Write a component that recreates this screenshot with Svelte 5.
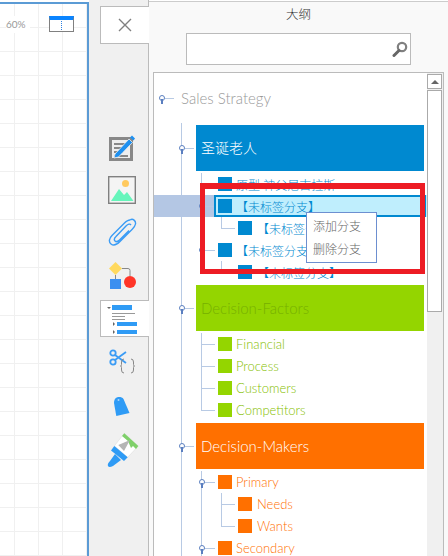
<script>
  const blue = '#0089d0', green = '#94d500', orange = '#ff7000';
  // l: 1 = big node, 2 = branch, 3 = leaf. more: the row's own trunk carries on below; pass: the level-2 trunk crosses a leaf row
  const rows = [
    { t: '圣诞老人', l: 1, c: blue, fg: '#fff', knob: true, cjk: true },
    { t: '原型 神父尼古拉斯', l: 2, c: blue, more: true, cjk: true },
    { t: '【未标签分支】', l: 2, c: blue, sel: true, knob: true, more: true, cjk: true },
    { t: '【未标签分支】', l: 3, c: blue, pass: true, cjk: true },
    { t: '【未标签分支】', l: 2, c: blue, knob: true, cjk: true },
    { t: '【未标签分支】', l: 3, c: blue, cjk: true },
    { t: 'Decision-Factors', l: 1, c: green, fg: '#76b000', knob: true },
    { t: 'Financial', l: 2, c: green, ink: '#86c000', more: true },
    { t: 'Process', l: 2, c: green, ink: '#86c000', more: true },
    { t: 'Customers', l: 2, c: green, ink: '#86c000', more: true },
    { t: 'Competitors', l: 2, c: green, ink: '#86c000' },
    { t: 'Decision-Makers', l: 1, c: orange, fg: '#fff', knob: true },
    { t: 'Primary', l: 2, c: orange, knob: true, more: true },
    { t: 'Needs', l: 3, c: orange, more: true, pass: true },
    { t: 'Wants', l: 3, c: orange, pass: true },
    { t: 'Secondary', l: 2, c: orange, knob: true, more: true }
  ];
</script>

<div class="page">
  <section class="canvas">
    <div class="zoom">
      <span class="pct">60%</span>
      <span class="layout-icon"><i></i></span>
    </div>
  </section>

  <nav class="rail">
    <div class="tab close">
      <svg width="14" height="14" viewBox="0 0 14 14"><path d="M1 1 L13 13 M13 1 L1 13" stroke="#808080" stroke-width="1.400" fill="none"/></svg>
    </div>
    <div class="tools upper">
      <svg width="26" height="27" viewBox="0 0 26 27">
        <rect x="1.500" y="3.500" width="21" height="21" fill="#eee" stroke="#888" stroke-width="3"/>
        <path d="M5 9h14M5 13h12M5 17h9M5 21h14" stroke="#888" stroke-width="2"/>
        <path d="M6 19 L20 4 L23.500 7.500 L9.500 22 L5 23 Z" fill="#1e90f0" stroke="#eee" stroke-width=".8"/>
        <path d="M21 2.500 L23 0.500 L26 3.500 L24.500 5.500 Z" fill="#1e90f0"/>
      </svg>
      <svg class="nudge" width="28" height="28" viewBox="0 0 28 28">
        <rect x=".7" y=".7" width="26.600" height="26.600" fill="#f4f4f4" stroke="#808080" stroke-width="1.400"/>
        <circle cx="17.500" cy="7.500" r="3.500" fill="#ffc95e"/>
        <path d="M3 25 L11 13 L16 19 L19 16 L25.500 25 Z" fill="#66f5bb"/>
      </svg>
      <svg class="nudge" width="30" height="29" viewBox="0 0 30 29">
        <path d="M22 2 C25 0 28 3 27.500 6 C27.200 8 26 9.500 24 11.500 L12 23.500 C9 26.500 5.500 28 3 26 C0.500 24 1 20.500 4 17.500 L16 5.500 C18 3.500 20 2 22 2 M23 7 C22 5.500 20 6 18 8 L8 18.500 C6.500 20 6 22 7 23 C8 24 10 23.500 11.500 22 L21 12.500" fill="none" stroke="#3b9cf5" stroke-width="1.400"/>
      </svg>
      <svg width="28" height="28" viewBox="0 0 28 28">
        <path d="M6.500 1 L13 7.500 L6.500 14 L0 7.500 Z" fill="#ffd95e"/>
        <rect x="1" y="18" width="11" height="10" fill="#3b8ff0"/>
        <circle cx="21" cy="21" r="6" fill="#ff3528"/>
        <path d="M13 7.500 H19 Q21 7.500 21 9.500 V15" fill="none" stroke="#888" stroke-width="1"/>
        <path d="M6.500 14 V18" stroke="#888" stroke-width="1"/>
      </svg>
    </div>
    <div class="tab list">
      <svg width="48" height="34" viewBox="0 0 48 34">
        <path d="M7 5 h4 l-2 2 Z" fill="#666"/>
        <rect x="12" y="3" width="20" height="5" fill="#2f9bf5"/>
        <path d="M12 11.500h23M12 14.500h13M12 17.500h13" stroke="#999" stroke-width="1"/>
        <path d="M13 20 l2 2 l-2 2 Z" fill="#666"/>
        <rect x="17" y="20" width="20" height="4" fill="#2f9bf5"/>
        <path d="M13 28 l2 2 l-2 2 Z" fill="#666"/>
        <rect x="17" y="28" width="20" height="4" fill="#2f9bf5"/>
      </svg>
    </div>
    <div class="tools lower">
      <svg width="26" height="28" viewBox="0 0 26 28">
        <circle cx="4" cy="4" r="2.700" fill="none" stroke="#3b9cf5" stroke-width="1.800"/>
        <circle cx="4" cy="13" r="2.700" fill="none" stroke="#3b9cf5" stroke-width="1.800"/>
        <path d="M6 6 L17 14 M6 11 L17 3" stroke="#3b9cf5" stroke-width="1.800"/>
        <path d="M15 10 Q12.500 10 12.500 13 V15.500 Q12.500 17 11.500 17 Q12.500 17 12.500 18.500 V21 Q12.500 24 15 24 M22 10 Q24.500 10 24.500 13 V15.500 Q24.500 17 25.500 17 Q24.500 17 24.500 18.500 V21 Q24.500 24 22 24" fill="none" stroke="#888" stroke-width="1"/>
      </svg>
      <svg class="tag" width="18" height="24" viewBox="0 0 18 24">
        <path d="M1 10 C1 6 3 4 6 4 C8 4 9.500 4.500 10.500 6 L16.500 20 L3.300 23 Z" fill="#2f9bf5"/>
        <circle cx="5.500" cy="7" r="1" fill="#a9d5fb"/>
      </svg>
      <svg class="nudge2" width="33" height="35" viewBox="0 0 33 35">
        <path d="M7.300 13 L17.300 .3 L31.300 13 L20.700 24.300 Z" fill="#fff" stroke="#ddd" stroke-width=".6"/>
        <path d="M17.300 .3 L31.300 13 L29 16 L26 13 L24 15 L21 8 L15 3 Z" fill="#7fd06a"/>
        <path d="M11.300 12 L23 7 L17 18 Z" fill="#b5b5b5"/>
        <path d="M7.300 13 L20.700 24.300 L17 28 L4 17.500 Z" fill="#2f9bf5"/>
        <path d="M8 21 L14 27 L6 33 Q2 35 1 33 Q0 31 3 28 Z" fill="#2f9bf5"/>
      </svg>
    </div>
  </nav>

  <main class="panel">
    <h1>大纲</h1>
    <div class="search">
      <svg width="16" height="16" viewBox="0 0 16 16">
        <circle cx="10" cy="6" r="4.200" fill="none" stroke="#808080" stroke-width="2.200"/>
        <path d="M7 9.500 L2 14.500" stroke="#666" stroke-width="3" stroke-linecap="round"/>
      </svg>
    </div>

    <div class="outline">
      <div class="tree">
        <div class="root">
          <span class="knob"></span>
          <span class="root-stem"></span>
          <span>Sales Strategy</span>
        </div>
        {#each rows as r}
          <div class="row l{r.l}" class:sel={r.sel} class:cjk={r.cjk}>
            {#if r.l === 1}
              <span class="stem"></span>
              <div class="big" style="background:{r.c};color:{r.fg}">{r.t}</div>
            {:else}
              {#if r.pass}<span class="trunk at2"></span>{/if}
              {#if r.more}<span class="trunk at{r.l}"></span>{/if}
              <span class="tee"></span>
              <span class="sq" style="background:{r.c}"></span>
              <span class="label" style="color:{r.ink ?? r.c}">{r.t}</span>
            {/if}
            {#if r.knob}<span class="knob"></span>{/if}
          </div>
        {/each}
      </div>
      <aside class="scroll">
        <div class="up"><i></i></div>
        <div class="thumb"></div>
      </aside>
    </div>
  </main>

  <div class="redbox"></div>
  <ul class="menu">
    <li>添加分支</li>
    <li>删除分支</li>
  </ul>
</div>

<style>
  :global(body) { margin: 0; background: #fff; }
  .page {
    position: relative;
    display: flex;
    width: 448px;
    height: 556px;
    overflow: hidden;
    font-family: Lato, "Noto Sans CJK SC", sans-serif;
  }
  .canvas {
    box-sizing: border-box;
    flex: 0 0 89px;
    margin-top: 2px;
    border-top: 2px solid #5b9bd5;
    border-right: 2px solid #5b9bd5;
    background-color: #fff;
    background-image:
      linear-gradient(#f0f0f0 1px, transparent 1px),
      linear-gradient(90deg, #f0f0f0 1px, transparent 1px);
    background-size: 24px 24px;
    background-position: -10px -1px;
  }
  .zoom {
    display: flex;
    align-items: flex-start;
    padding: 12px 0 0 6px;
  }
  .pct {
    width: 43px;
    height: 17px;
    line-height: 17px;
    font-size: 10px;
    color: #999;
    background: linear-gradient(90deg, #fff 24px, transparent 24px);
  }
  .layout-icon {
    box-sizing: border-box;
    display: block;
    width: 25px;
    height: 16px;
    background: #fff;
    border: 1px solid #808080;
    border-top: 4px solid #0a84ff;
  }
  .layout-icon i {
    display: block;
    width: 0;
    height: 9px;
    margin: 1px 0 0 11px;
    border-left: 1px dotted #2a7fe0;
  }

  .rail {
    box-sizing: border-box;
    flex: 0 0 60px;
    display: flex;
    flex-direction: column;
    align-items: flex-end;
    background: #f0f0f0;
    border-right: 1px solid #bbb;
  }
  .tab {
    box-sizing: border-box;
    flex: none;
    width: 49px;
    margin-right: -1px;
    display: flex;
    align-items: center;
    justify-content: center;
    background: #fff;
    border: 1px solid #bbb;
    border-right: 0;
  }
  .tab.close { height: 38px; margin-top: 6px; padding-right: 1px; }
  .tab.list { height: 37px; margin-top: 11px; justify-content: flex-start; }
  .tab.list svg { margin-left: -1px; }
  .tools {
    align-self: stretch;
    display: flex;
    flex-direction: column;
    align-items: flex-start;
    padding-left: 20px;
  }
  .upper { margin-top: 91px; gap: 14px; }
  .lower { margin-top: 12px; gap: 16px; }
  .nudge { margin-left: -1px; }
  .nudge2 { margin-left: -2px; }
  .tag { margin-left: 4px; }

  .panel {
    box-sizing: border-box;
    flex: 1;
    min-width: 0;
    background: #f9f9f9;
    border-top: 1px solid #ccc;
    margin-top: 1px;
  }
  h1 {
    margin: 3px 0 0;
    height: 20px;
    line-height: 20px;
    text-align: center;
    font-size: 12.500px;
    font-weight: 300;
    color: #333;
  }
  .search {
    box-sizing: border-box;
    width: 225px;
    height: 32px;
    margin: 8px 0 0 37px;
    display: flex;
    align-items: center;
    justify-content: flex-end;
    padding-right: 2px;
    background: #fff;
    border: 1px solid #bbb;
  }
  .outline {
    box-sizing: border-box;
    display: flex;
    width: 291px;
    height: 490px;
    margin: 7px 0 0 4px;
    background: #fff;
    border: 1px solid #bbb;
  }
  .tree {
    position: relative;
    flex: 0 0 273px;
    background: #fff;
  }
  .tree::before {
    content: "";
    position: absolute;
    left: 27px;
    top: 50px;
    bottom: 0;
    border-left: 1px solid #b8cae4;
  }
  .root {
    position: relative;
    height: 50px;
    line-height: 50px;
    padding-left: 27px;
    font-size: 15px;
    font-weight: 300;
    color: #999;
  }
  .root .knob { left: 5px; top: 22px; }
  .root-stem {
    position: absolute;
    left: 11px;
    top: 25px;
    width: 9px;
    border-top: 1px solid #b8cae4;
  }
  .knob {
    position: absolute;
    box-sizing: border-box;
    width: 6px;
    height: 6px;
    border: 1.500px solid #5b7fc0;
    border-radius: 50%;
    background: #fff;
    z-index: 2;
  }
  .knob::after {
    content: "";
    position: absolute;
    left: 0.500px;
    top: 3px;
    width: 2px;
    height: 5px;
    background: #5b7fc0;
  }
  .row {
    position: relative;
    display: flex;
    align-items: center;
    height: 22px;
    font-size: 13px;
    font-weight: 300;
  }
  .row.cjk { font-size: 12px; }
  .row.l1 {
    height: 46px;
    margin-top: 2px;
    padding: 0 3px 2px 42px;
    box-sizing: content-box;
  }
  .row.l1 .knob { left: 25px; top: 20px; }
  .stem {
    position: absolute;
    left: 31px;
    top: 23px;
    width: 9px;
    border-top: 1px solid #b8cae4;
  }
  .big {
    box-sizing: border-box;
    flex: 1;
    height: 46px;
    line-height: 46px;
    padding-left: 5px;
    font-size: 15px;
    font-weight: 300;
  }
  .row.cjk .big { font-size: 14px; }
  .row.l2 { padding-left: 64px; }
  .row.l3 { padding-left: 84px; }
  .sq {
    position: relative;
    z-index: 1;
    flex: 0 0 14px;
    height: 14px;
    margin-right: 4px;
  }
  .row.l3 .sq { margin-right: 5px; }
  .label { position: relative; z-index: 1; white-space: nowrap; }
  .tee {
    position: absolute;
    top: 0;
    height: 11px;
    width: 13px;
    border-left: 1px solid #b8cae4;
    border-bottom: 1px solid #b8cae4;
  }
  .row.l2 .tee { left: 47px; }
  .row.l3 .tee { left: 67px; }
  .trunk {
    position: absolute;
    top: 0;
    bottom: 0;
    border-left: 1px solid #b8cae4;
  }
  .trunk.at2 { left: 47px; }
  .trunk.at3 { left: 67px; }
  .row.l2 .knob { left: 45px; top: 8px; }
  .row.sel {
    background: linear-gradient(90deg, #b4c7e4 60px, #bfeefd 60px);
  }
  .row.sel::after {
    content: "";
    position: absolute;
    box-sizing: border-box;
    left: 60px;
    top: 0;
    width: 212px;
    height: 22px;
    border: 2px solid #0089d0;
  }
  .scroll {
    flex: 1;
    background: #f0f0f0;
    display: flex;
    flex-direction: column;
    gap: 1px;
    padding-top: 1px;
  }
  .up, .thumb {
    box-sizing: border-box;
    width: 15px;
    background: #fff;
    border: 1px solid #aaa;
  }
  .up {
    height: 15px;
    display: flex;
    align-items: center;
    justify-content: center;
  }
  .up i {
    width: 0;
    height: 0;
    border: 4px solid transparent;
    border-top: 0;
    border-bottom: 4px solid #666;
  }
  .thumb { height: 222px; }

  .redbox {
    position: absolute;
    box-sizing: border-box;
    left: 200px;
    top: 183px;
    width: 225px;
    height: 91px;
    border: 5px solid #ed1c24;
    border-top-width: 6px;
    z-index: 5;
  }
  .menu {
    position: absolute;
    box-sizing: border-box;
    left: 306px;
    top: 212px;
    width: 71px;
    height: 51px;
    margin: 0;
    padding: 2px 0 0 6px;
    list-style: none;
    background: #fff;
    border: 1px solid #6d8fd0;
    color: #666;
    font-size: 12px;
    font-weight: 300;
    z-index: 6;
  }
  .menu li { height: 23px; line-height: 23px; }
</style>
